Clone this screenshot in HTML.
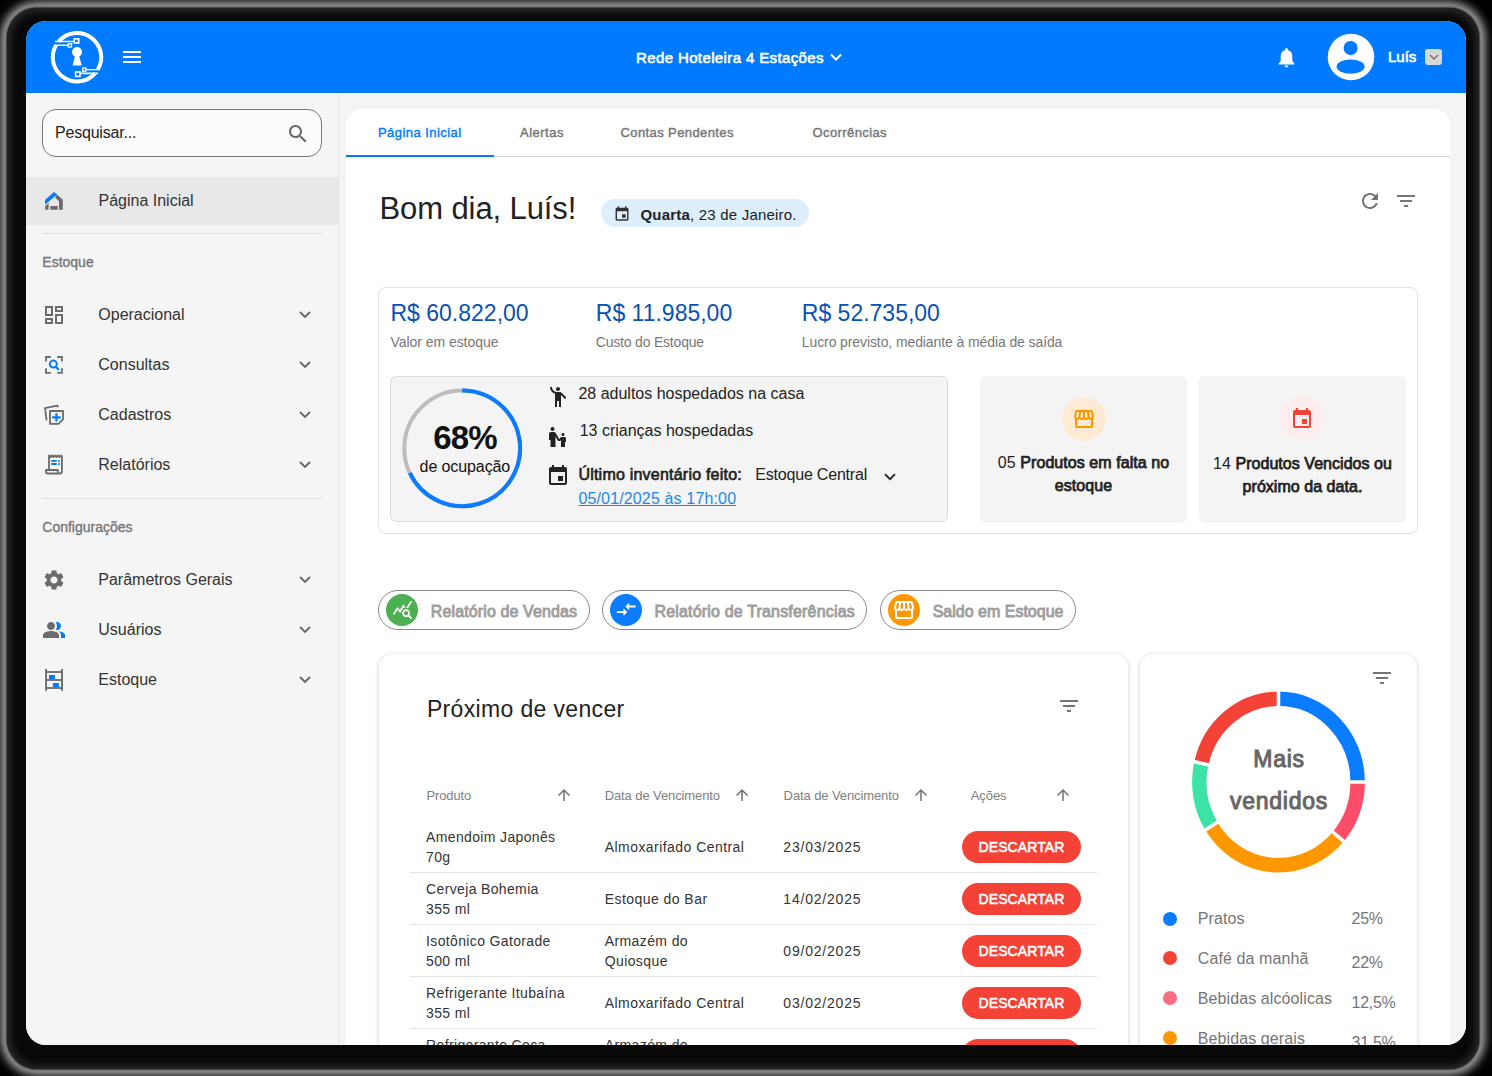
<!DOCTYPE html>
<html><head><meta charset="utf-8">
<style>
*{box-sizing:border-box;margin:0;padding:0}
html,body{width:1492px;height:1076px;overflow:hidden;background:#000;font-family:"Liberation Sans",sans-serif}
.glow{position:absolute;left:7px;top:8px;width:1472px;height:1061px;border-radius:30px;box-shadow:0 0 10px 6px #b0b0b0}
.dark{position:absolute;left:7px;top:8px;width:1472px;height:1061px;border-radius:30px;background:#080808;box-shadow:0 0 2px 1px #2a2a2a,inset 0 0 8px 3px #2e2e2e}
.frame{position:absolute;left:26px;top:21px;width:1440px;height:1024px;border-radius:20px;overflow:hidden;background:#F4F4F4}
.P{position:absolute;left:-26px;top:-21px;width:1492px;height:1076px}
.a{position:absolute}
.t{position:absolute;white-space:nowrap;line-height:1}
.sb{-webkit-text-stroke:0.75px #222}
svg{position:absolute;overflow:visible}
</style></head>
<body>
<div class="glow"></div><div class="dark"></div>
<div class="frame"><div class="P">
<div class="a" style="left:26px;top:93px;width:312px;height:952px;background:#F5F5F5"></div>
<div class="a" style="left:338px;top:93px;width:1px;height:952px;background:#E3E3E3"></div>
<div class="a" style="left:339px;top:93px;width:1127px;height:952px;background:#F4F4F4"></div>
<div class="a" style="left:346px;top:109px;width:1104px;height:960px;background:#fff;border-radius:16px 16px 0 0"></div>
<div class="a" style="left:26px;top:21px;width:1440px;height:72px;background:#007BFF"></div>
<svg style="left:0px;top:0px;" width="200" height="100" viewBox="0 0 200 100"><g fill="none" stroke="#fff"><path d="M58.58 41.5 A24.2 24.2 0 0 1 97.78 69.6" stroke-width="4"/><path d="M95.07 73.3 A24.2 24.2 0 0 1 55.98 45.2" stroke-width="4"/><path d="M55 41.5 H74" stroke-width="1.6"/><rect x="74.3" y="38.8" width="4.4" height="4.2" stroke-width="1.6"/><path d="M54 45.2 H68" stroke-width="1.4"/><rect x="68.2" y="43.8" width="3.3" height="3.2" stroke-width="1.3"/><path d="M86 69.6 H100" stroke-width="1.4"/><rect x="82.6" y="68" width="3.3" height="3.2" stroke-width="1.3"/><path d="M80 73.4 H98" stroke-width="1.6"/><rect x="75.6" y="72" width="4.4" height="4.4" stroke-width="1.6"/></g><g fill="#fff"><circle cx="77" cy="52" r="5"/><path d="M75.2 55 L78.8 55 L81.8 65.6 L72.6 65.6 Z"/><rect x="123" y="51" width="18" height="2"/><rect x="123" y="56" width="18" height="2"/><rect x="123" y="61" width="18" height="2"/></g></svg>
<div class="t" style="left:636.00px;top:49.70px;font-size:15px;color:#fff;letter-spacing:0.38px;-webkit-text-stroke:0.6px #fff;">Rede Hoteleira 4 Estações</div>
<svg style="left:830px;top:53px;" width="12" height="8" viewBox="0 0 12 8"><path d="M1 1.5 L6 6.5 L11 1.5" fill="none" stroke="#fff" stroke-width="2"/></svg>
<svg style="left:1278px;top:47px;" width="17" height="21" viewBox="0 0 17 21"><path d="M8.5 1.2c1 0 1.6.7 1.6 1.5v.6c2.6.7 4.2 3 4.2 5.8v5.2l2 2v1.2H.7v-1.2l2-2V9.1c0-2.8 1.6-5.1 4.2-5.8v-.6c0-.8.6-1.5 1.6-1.5zM6.6 18.6h3.8c0 1.1-.9 1.9-1.9 1.9s-1.9-.8-1.9-1.9z" fill="#fff"/></svg>
<svg style="left:1327px;top:33px;" width="48" height="48" viewBox="0 0 48 48"><circle cx="24" cy="24" r="23.3" fill="#fff"/><circle cx="23.6" cy="15" r="7" fill="#007BFF"/><ellipse cx="23.6" cy="33.6" rx="14" ry="7.2" fill="#007BFF"/></svg>
<div class="t" style="left:1388.00px;top:49.00px;font-size:15px;color:#fff;letter-spacing:0px;-webkit-text-stroke:0.6px #fff;">Luís</div>
<div class="a" style="left:1425px;top:49px;width:17px;height:16px;background:#D8D8D8;border-radius:3px"></div>
<svg style="left:1429px;top:54px;" width="10" height="6" viewBox="0 0 10 6"><path d="M1 1 L5 5 L9 1" fill="none" stroke="#777" stroke-width="1.5"/></svg>
<div class="a" style="left:42px;top:109px;width:280px;height:48px;background:#FBFBFB;border:1px solid #7A7A7A;border-radius:14px"></div>
<div class="t" style="left:55.00px;top:124.65px;font-size:16px;color:#222;letter-spacing:-0.2px;">Pesquisar...</div>
<svg style="left:285.7px;top:121.7px;" width="24" height="24" viewBox="0 0 24 24"><path fill="#666" d="M15.5 14h-.79l-.28-.27C15.41 12.59 16 11.11 16 9.5 16 5.91 13.09 3 9.5 3S3 5.91 3 9.5 5.91 16 9.5 16c1.61 0 3.09-.59 4.23-1.57l.27.28v.79l5 4.99L20.49 19l-4.99-5zm-6 0C7.01 14 5 11.99 5 9.5S7.01 5 9.5 5 14 7.01 14 9.5 11.99 14 9.5 14z"/></svg>
<div class="a" style="left:26px;top:177px;width:312px;height:48px;background:#E8E8E8"></div>
<svg style="left:36px;top:180px;" width="40" height="40" viewBox="0 0 40 40"><path fill="#007BFF" d="M9 20 L18 12 L21.2 14.5 L9.1 24.5 Z"/><path fill="#6B6B6B" d="M21.2 14.5 L26.8 19.7 L26.8 29.7 L23 29.7 L23 21.2 L19 17.5 Z M9.1 26 L12.6 23 L12.6 29.7 L9.1 29.7 Z M14.3 26 H21.7 V29.7 H14.3 Z"/></svg>
<div class="t" style="left:98.50px;top:192.65px;font-size:16px;color:#333;">Página Inicial</div>
<div class="a" style="left:42px;top:233px;width:280px;height:1px;background:#DCDCDC"></div>
<div class="t" style="left:42.30px;top:255.45px;font-size:14px;color:#777;letter-spacing:0px;-webkit-text-stroke:0.35px #777;">Estoque</div>
<div class="t" style="left:98.30px;top:306.85px;font-size:16px;color:#333;">Operacional</div>
<svg style="left:299px;top:310.5px;" width="12" height="8" viewBox="0 0 12 8"><path d="M1 1 L6 6 L11 1" fill="none" stroke="#666" stroke-width="1.8"/></svg>
<div class="t" style="left:98.30px;top:356.85px;font-size:16px;color:#333;">Consultas</div>
<svg style="left:299px;top:360.5px;" width="12" height="8" viewBox="0 0 12 8"><path d="M1 1 L6 6 L11 1" fill="none" stroke="#666" stroke-width="1.8"/></svg>
<div class="t" style="left:98.30px;top:406.85px;font-size:16px;color:#333;">Cadastros</div>
<svg style="left:299px;top:410.5px;" width="12" height="8" viewBox="0 0 12 8"><path d="M1 1 L6 6 L11 1" fill="none" stroke="#666" stroke-width="1.8"/></svg>
<div class="t" style="left:98.30px;top:456.85px;font-size:16px;color:#333;">Relatórios</div>
<svg style="left:299px;top:460.5px;" width="12" height="8" viewBox="0 0 12 8"><path d="M1 1 L6 6 L11 1" fill="none" stroke="#666" stroke-width="1.8"/></svg>
<svg style="left:42px;top:303px;" width="24" height="24" viewBox="0 0 24 24"><path fill="#6B6B6B" d="M19 5v2h-4V5h4M9 5v6H5V5h4m10 8v6h-4v-6h4M9 17v2H5v-2h4M21 3h-8v6h8V3zM11 3H3v10h8V3zm10 8h-8v10h8V11zm-10 4H3v6h8v-6z"/></svg>
<svg style="left:36px;top:344px;" width="40" height="40" viewBox="0 0 40 40"><g fill="none" stroke="#6B6B6B" stroke-width="1.8"><path d="M10 17.6 V13 H14.8"/><path d="M21.2 13 H25.9 V17.6"/><path d="M10 24.2 V28.8 H14.8"/><path d="M21.2 28.8 H25.9 V24.2"/></g><g fill="none" stroke="#007BFF" stroke-width="2"><circle cx="17.3" cy="20.1" r="3.5"/><path d="M20 23 L22.3 25.2" stroke-linecap="round" stroke-width="2.2"/></g></svg>
<svg style="left:36px;top:394px;" width="40" height="40" viewBox="0 0 40 40"><g fill="none" stroke="#6B6B6B" stroke-width="1.8" stroke-linejoin="round"><path d="M10.6 26.4 L9 14.1 L21.2 11.6 L22.3 13.2"/><path d="M14 17 H27 V25.3 L22.5 29.8 H14 Z"/></g><g stroke="#007BFF" stroke-width="2.2" stroke-linecap="round"><path d="M20.4 20 V26.7"/><path d="M17 23.4 H23.8"/></g></svg>
<svg style="left:36px;top:444px;" width="40" height="40" viewBox="0 0 40 40"><g fill="none" stroke="#6B6B6B" stroke-width="1.8" stroke-linejoin="round"><path d="M13 25.5 V11.5 L14.5 13 L16 11.5 L17.5 13 L19 11.5 L20.5 13 L22 11.5 L23.5 13 L25 11.5 L25.9 12.5 V27.5 Q25.9 29.5 23.9 29.5 H11.5 Q10 29.5 10 27.5 V26 H21.8 V29"/></g><g fill="#007BFF"><rect x="15.1" y="16" width="5.7" height="1.8" rx=".4"/><rect x="22.1" y="16" width="1.9" height="1.8" rx=".4"/><rect x="15.1" y="19.1" width="5.7" height="1.9" rx=".4"/><rect x="22.1" y="19.1" width="1.9" height="1.9" rx=".4"/></g></svg>
<div class="a" style="left:42px;top:498px;width:280px;height:1px;background:#DCDCDC"></div>
<div class="t" style="left:42.30px;top:520.35px;font-size:14px;color:#777;letter-spacing:0px;-webkit-text-stroke:0.35px #777;">Configurações</div>
<div class="t" style="left:98.30px;top:571.85px;font-size:16px;color:#333;">Parâmetros Gerais</div>
<svg style="left:299px;top:575.5px;" width="12" height="8" viewBox="0 0 12 8"><path d="M1 1 L6 6 L11 1" fill="none" stroke="#666" stroke-width="1.8"/></svg>
<div class="t" style="left:98.30px;top:621.85px;font-size:16px;color:#333;">Usuários</div>
<svg style="left:299px;top:625.5px;" width="12" height="8" viewBox="0 0 12 8"><path d="M1 1 L6 6 L11 1" fill="none" stroke="#666" stroke-width="1.8"/></svg>
<div class="t" style="left:98.30px;top:671.85px;font-size:16px;color:#333;">Estoque</div>
<svg style="left:299px;top:675.5px;" width="12" height="8" viewBox="0 0 12 8"><path d="M1 1 L6 6 L11 1" fill="none" stroke="#666" stroke-width="1.8"/></svg>
<svg style="left:42px;top:568px;" width="24" height="24" viewBox="0 0 24 24"><path fill="#6B6B6B" d="M19.14 12.94c.04-.3.06-.61.06-.94 0-.32-.02-.64-.07-.94l2.03-1.58c.18-.14.23-.41.12-.61l-1.92-3.32c-.12-.22-.37-.29-.59-.22l-2.39.96c-.5-.38-1.03-.7-1.62-.94l-.36-2.54c-.04-.24-.24-.41-.48-.41h-3.84c-.24 0-.43.17-.47.41l-.36 2.54c-.59.24-1.13.57-1.62.94l-2.39-.96c-.22-.08-.47 0-.59.22L2.74 8.87c-.12.21-.08.47.12.61l2.03 1.58c-.05.3-.09.63-.09.94s.02.64.07.94l-2.03 1.58c-.18.14-.23.41-.12.61l1.92 3.32c.12.22.37.29.59.22l2.39-.96c.5.38 1.03.7 1.62.94l.36 2.54c.05.24.24.41.48.41h3.84c.24 0 .44-.17.47-.41l.36-2.54c.59-.24 1.13-.56 1.62-.94l2.39.96c.22.08.47 0 .59-.22l1.92-3.32c.12-.22.07-.47-.12-.61l-2.01-1.58zM12 15.6c-1.98 0-3.6-1.62-3.6-3.6s1.62-3.6 3.6-3.6 3.6 1.62 3.6 3.6-1.62 3.6-3.6 3.6z"/></svg>
<svg style="left:42.1px;top:617.9px;" width="24" height="24" viewBox="0 0 24 24"><path fill="#007BFF" d="M16.67 13.13C18.04 14.06 19 15.32 19 17v3h4v-3c0-2.18-3.57-3.47-6.33-3.87zM15 12c2.21 0 4-1.79 4-4s-1.79-4-4-4c-.47 0-.91.1-1.33.24C14.5 5.27 15 6.58 15 8s-.5 2.73-1.33 3.76c.42.14.86.24 1.33.24z"/><path fill="#6B6B6B" d="M9 12c2.21 0 4-1.79 4-4s-1.79-4-4-4-4 1.79-4 4 1.79 4 4 4zm0 1c-2.67 0-8 1.34-8 4v3h16v-3c0-2.66-5.33-4-8-4z"/></svg>
<svg style="left:36px;top:659px;" width="40" height="40" viewBox="0 0 40 40"><g fill="#6B6B6B"><rect x="9.1" y="10" width="1.9" height="21.8"/><rect x="25.1" y="10" width="1.9" height="21.8"/><rect x="10" y="12.1" width="16" height="1.8"/><rect x="10" y="20.1" width="16" height="1.8"/><rect x="10" y="28.1" width="16" height="1.8"/></g><g fill="#007BFF"><rect x="13" y="16" width="6" height="4.1"/><rect x="16.9" y="24" width="6" height="4.1"/></g></svg>
<div class="t" style="left:378.00px;top:126.29px;font-size:13px;color:#007BFF;letter-spacing:0.45px;-webkit-text-stroke:0.4px #007BFF;">Página Inicial</div>
<div class="t" style="left:520.00px;top:126.29px;font-size:13px;color:#757575;letter-spacing:0.5px;-webkit-text-stroke:0.4px #757575;">Alertas</div>
<div class="t" style="left:620.50px;top:126.29px;font-size:13px;color:#757575;letter-spacing:0.4px;-webkit-text-stroke:0.4px #757575;">Contas Pendentes</div>
<div class="t" style="left:812.50px;top:126.29px;font-size:13px;color:#757575;letter-spacing:0.4px;-webkit-text-stroke:0.4px #757575;">Ocorrências</div>
<div class="a" style="left:346px;top:156px;width:1104px;height:1px;background:#CFCFCF"></div>
<div class="a" style="left:346px;top:155px;width:148px;height:2px;background:#007BFF"></div>
<div class="t" style="left:379.50px;top:192.95px;font-size:31px;color:#222;letter-spacing:-0.1px;">Bom dia, Luís!</div>
<div class="a" style="left:601px;top:199px;width:208px;height:28px;background:#DDEEFD;border-radius:14px"></div>
<svg style="left:609.5px;top:201.5px;" width="24" height="24" viewBox="0 0 24 24"><g transform="translate(3.4,3.6) scale(0.72)"><path fill="#333" d="M17 12h-5v5h5v-5zM16 1v2H8V1H6v2H5c-1.11 0-1.99.9-1.99 2L3 19c0 1.1.89 2 2 2h14c1.1 0 2-.9 2-2V5c0-1.1-.9-2-2-2h-1V1h-2zm3 18H5V8h14v11z"/></g></svg>
<div class="t" style="left:640.5px;top:206.80px;font-size:15px;color:#222;letter-spacing:0.2px"><b>Quarta</b>, 23 de Janeiro.</div>
<svg style="left:1358px;top:189px;" width="24" height="24" viewBox="0 0 24 24"><path fill="#757575" d="M17.65 6.35C16.2 4.9 14.21 4 12 4c-4.42 0-7.99 3.58-7.99 8s3.57 8 7.99 8c3.73 0 6.84-2.55 7.73-6h-2.08c-.82 2.33-3.04 4-5.65 4-3.31 0-6-2.69-6-6s2.69-6 6-6c1.66 0 3.14.69 4.22 1.78L13 11h7V4l-2.35 2.35z"/></svg>
<svg style="left:1394px;top:189px;" width="24" height="24" viewBox="0 0 24 24"><path fill="#757575" d="M10 18h4v-2h-4v2zM3 6v2h18V6H3zm3 7h12v-2H6v2z"/></svg>
<div class="a" style="left:378px;top:287px;width:1040px;height:247px;border:1px solid #E2E2E2;border-radius:8px"></div>
<div class="t" style="left:390.50px;top:302.13px;font-size:23px;color:#0653B4;">R$ 60.822,00</div>
<div class="t" style="left:390.50px;top:334.95px;font-size:14px;color:#777;letter-spacing:-0.05px;">Valor em estoque</div>
<div class="t" style="left:595.80px;top:302.13px;font-size:23px;color:#0653B4;">R$ 11.985,00</div>
<div class="t" style="left:595.80px;top:334.95px;font-size:14px;color:#777;letter-spacing:-0.2px;">Custo do Estoque</div>
<div class="t" style="left:801.80px;top:302.13px;font-size:23px;color:#0653B4;">R$ 52.735,00</div>
<div class="t" style="left:801.80px;top:334.95px;font-size:14px;color:#777;letter-spacing:-0.1px;">Lucro previsto, mediante à média de saída</div>
<div class="a" style="left:390px;top:376px;width:558px;height:146px;background:#F4F4F4;border:1px solid #DDDDDD;border-radius:6px"></div>
<svg style="left:0px;top:0px;pointer-events:none" width="1492" height="1076" viewBox="0 0 1492 1076"><circle cx="462.2" cy="448.3" r="57.9" fill="none" stroke="#BDBDBD" stroke-width="4"/><path d="M462.2 390.40000000000003 A57.9 57.9 0 1 1 409.81 472.95" fill="none" stroke="#0A7CFF" stroke-width="4"/></svg>
<div class="t" style="left:405.00px;width:120px;text-align:center;top:421.36px;font-size:33px;color:#111;font-weight:700;letter-spacing:-0.8px;">68%</div>
<div class="t" style="left:404.90px;width:120px;text-align:center;top:459.35px;font-size:16px;color:#111;letter-spacing:-0.1px;">de ocupação</div>
<svg style="left:545.9px;top:385.1px;" width="24" height="24" viewBox="0 0 24 24"><g fill="#222"><circle cx="12" cy="4" r="2"/><path d="M15.89 8.11C15.5 7.72 14.83 7 13.53 7h-2.54C8.24 6.99 6 4.75 6 2H4c0 3.16 2.11 5.84 5 6.71V22h2v-6h2v6h2V10.05L18.95 14l1.41-1.41-4.47-4.48z"/></g></svg>
<div class="t" style="left:578.40px;top:385.55px;font-size:16px;color:#222;">28 adultos hospedados na casa</div>
<svg style="left:545.7px;top:424.8px;" width="24" height="24" viewBox="0 0 24 24"><path fill="#222" d="M6.5 2c1.1 0 2 .9 2 2s-.9 2-2 2-2-.9-2-2 .9-2 2-2zm9 7.5c0 .83.67 1.5 1.5 1.5s1.5-.67 1.5-1.5S17.83 8 17 8s-1.5.67-1.5 1.5zm3 2.5h-2.84c-.58.01-1.14.32-1.45.86l-.92 1.32L9.72 8c-.37-.63-1.03-.99-1.71-1H5c-1.1 0-2 .9-2 2v6h1.5v7h5V11.61L12.03 16h2.2l.77-1.1V22h4v-5h1v-3.5c0-.82-.67-1.5-1.5-1.5z"/></svg>
<div class="t" style="left:579.70px;top:423.45px;font-size:16px;color:#222;">13 crianças hospedadas</div>
<svg style="left:545.7px;top:464.2px;" width="24" height="24" viewBox="0 0 24 24"><path fill="#222" d="M17 12h-5v5h5v-5zM16 1v2H8V1H6v2H5c-1.11 0-1.99.9-1.99 2L3 19c0 1.1.89 2 2 2h14c1.1 0 2-.9 2-2V5c0-1.1-.9-2-2-2h-1V1h-2zm3 18H5V8h14v11z"/></svg>
<div class="t" style="left:578.40px;top:467.15px;font-size:16px;color:#222;letter-spacing:0.22px;-webkit-text-stroke:0.65px #222;">Último inventário feito:</div>
<div class="t" style="left:755.30px;top:467.15px;font-size:16px;color:#222;letter-spacing:-0.2px;">Estoque Central</div>
<svg style="left:884px;top:473.3px;" width="12" height="8" viewBox="0 0 12 8"><path d="M1 1.2 L6 6.2 L11 1.2" fill="none" stroke="#222" stroke-width="1.8"/></svg>
<div class="t" style="left:578.40px;top:491.35px;font-size:16px;color:#1E88F0;letter-spacing:0.15px;text-decoration:underline;">05/01/2025 às 17h:00</div>
<div class="a" style="left:980px;top:376px;width:207px;height:145px;background:#F4F4F4;border-radius:6px;box-shadow:0 1px 1px rgba(0,0,0,0.08)"></div>
<div class="a" style="left:1199px;top:376px;width:207px;height:145px;background:#F4F4F4;border-radius:6px;box-shadow:0 1px 1px rgba(0,0,0,0.08)"></div>
<div class="a" style="left:1061.9px;top:397.3px;width:44px;height:44px;background:#FFEBD3;border-radius:50%"></div>
<div class="a" style="left:1280.4px;top:396.2px;width:44px;height:44px;background:#FDEDED;border-radius:50%"></div>
<svg style="left:1071.8px;top:407px;" width="24" height="24" viewBox="0 0 24 24"><g fill="#FF9800"><path d="M21.9 8.89l-1.05-4.37c-.22-.9-1-1.52-1.91-1.52H5.05c-.9 0-1.69.63-1.9 1.52L2.1 8.89c-.24 1.02-.02 2.06.62 2.88.08.11.19.19.28.29V19c0 1.1.9 2 2 2h14c1.1 0 2-.9 2-2v-6.94c.09-.09.2-.18.28-.28.64-.82.87-1.87.62-2.89zm-2.99-3.9l1.05 4.37c.1.42.01.84-.25 1.17-.14.18-.44.47-.94.47-.61 0-1.14-.49-1.21-1.14L16.98 5l1.93-.01zM13 5h1.96l.54 4.52c.05.39-.07.78-.33 1.07-.22.26-.54.41-.95.41-.67 0-1.22-.59-1.22-1.31V5zM8.49 9.52L9.04 5H11v4.69c0 .72-.55 1.31-1.29 1.31-.34 0-.65-.15-.89-.41-.25-.29-.37-.68-.33-1.07zm-4.45-.16L5.05 5h1.97l-.58 4.86c-.08.65-.6 1.14-1.21 1.14-.49 0-.8-.29-.93-.47-.27-.32-.36-.75-.26-1.17zM5 19v-6.03c.08.01.15.03.23.03.87 0 1.66-.36 2.24-.95.6.6 1.4.95 2.31.95.87 0 1.65-.36 2.23-.93.59.57 1.39.93 2.29.93.84 0 1.64-.35 2.24-.95.58.59 1.37.95 2.24.95.08 0 .15-.02.23-.03V19H5z"/></g></svg>
<svg style="left:1290.4px;top:406.8px;" width="24" height="24" viewBox="0 0 24 24"><path fill="#F44336" d="M17 12h-5v5h5v-5zM16 1v2H8V1H6v2H5c-1.11 0-1.99.9-1.99 2L3 19c0 1.1.89 2 2 2h14c1.1 0 2-.9 2-2V5c0-1.1-.9-2-2-2h-1V1h-2zm3 18H5V8h14v11z"/></svg>
<div class="t" style="left:980px;width:207px;text-align:center;top:450.50px;font-size:16px;line-height:23.5px;color:#222;white-space:normal;letter-spacing:0.06px;padding:0 8px">05 <span class="sb">Produtos em falta no estoque</span></div>
<div class="t" style="left:1199px;width:207px;text-align:center;top:451.55px;font-size:16px;line-height:23.8px;color:#222;white-space:normal;letter-spacing:0.04px;padding:0 4px">14 <span class="sb">Produtos Vencidos ou próximo da data.</span></div>
<div class="a" style="left:378px;top:590px;width:212px;height:40px;border:1px solid #8A8A8A;border-radius:20px;background:#fff"></div>
<div class="a" style="left:386.1px;top:593.7px;width:32px;height:32px;background:#4CAF50;border-radius:50%"></div>
<svg style="left:391.5px;top:599.2px;" width="21" height="21" viewBox="0 0 24 24"><path fill="#fff" d="M19.88 18.47c.44-.7.7-1.51.7-2.39 0-2.49-2.01-4.5-4.5-4.5s-4.5 2.01-4.5 4.5 2.01 4.5 4.49 4.5c.88 0 1.7-.26 2.39-.7L21.58 23 23 21.58l-3.12-3.11zm-3.8.11c-1.38 0-2.5-1.12-2.5-2.5s1.12-2.5 2.5-2.5 2.5 1.12 2.5 2.5-1.12 2.5-2.5 2.5zm-.36-8.5c-.74.02-1.45.18-2.1.45l-.55-.83-3.8 6.18-3.01-3.52-3.63 5.81L1 17l5-8 3 3.5L13 6l2.72 4.08zm2.59.5c-.64-.28-1.330-.45-2.05-.49L21.38 2 23 3.18l-4.69 7.4z"/></svg>
<div class="t" style="left:430.80px;top:603.75px;font-size:16px;color:#9E9E9E;letter-spacing:0.12px;-webkit-text-stroke:0.85px #9E9E9E;">Relatório de Vendas</div>
<div class="a" style="left:602px;top:590px;width:265px;height:40px;border:1px solid #8A8A8A;border-radius:20px;background:#fff"></div>
<div class="a" style="left:609.9px;top:593.7px;width:32px;height:32px;background:#0A7CFF;border-radius:50%"></div>
<svg style="left:614.6px;top:598.3px;" width="22.6" height="22.6" viewBox="0 0 24 24"><path fill="#fff" d="M9.01 14H2v2h7.01v3L13 15l-3.990-4v3zm5.98-1v-3H22V8h-7.01V5L11 9l3.99 4z"/></svg>
<div class="t" style="left:654.40px;top:603.75px;font-size:16px;color:#9E9E9E;letter-spacing:0.18px;-webkit-text-stroke:0.85px #9E9E9E;">Relatório de Transferências</div>
<div class="a" style="left:880px;top:590px;width:196px;height:40px;border:1px solid #8A8A8A;border-radius:20px;background:#fff"></div>
<div class="a" style="left:887.9px;top:593.7px;width:32px;height:32px;background:#FF9800;border-radius:50%"></div>
<svg style="left:891.9px;top:597.6px;" width="24" height="24" viewBox="0 0 24 24"><g fill="#fff"><path d="M21.9 8.89l-1.05-4.37c-.22-.9-1-1.52-1.91-1.52H5.05c-.9 0-1.69.63-1.9 1.52L2.1 8.89c-.24 1.02-.02 2.06.62 2.88.08.11.19.19.28.29V19c0 1.1.9 2 2 2h14c1.1 0 2-.9 2-2v-6.94c.09-.09.2-.18.28-.28.64-.82.87-1.87.62-2.89zm-2.99-3.9l1.05 4.37c.1.42.01.84-.25 1.17-.14.18-.44.47-.94.47-.61 0-1.14-.49-1.21-1.14L16.98 5l1.93-.01zM13 5h1.96l.54 4.52c.05.39-.07.78-.33 1.07-.22.26-.54.41-.95.41-.67 0-1.22-.59-1.22-1.31V5zM8.49 9.52L9.04 5H11v4.69c0 .72-.55 1.31-1.29 1.31-.34 0-.65-.15-.89-.41-.25-.29-.37-.68-.33-1.07zm-4.45-.16L5.05 5h1.97l-.58 4.86c-.08.65-.6 1.14-1.21 1.14-.49 0-.8-.29-.93-.47-.27-.32-.36-.75-.26-1.17zM5 19v-6.03c.08.01.15.03.23.03.87 0 1.66-.36 2.24-.95.6.6 1.4.95 2.31.95.87 0 1.65-.36 2.23-.93.59.57 1.39.93 2.29.93.84 0 1.64-.35 2.24-.95.58.59 1.37.95 2.24.95.08 0 .15-.02.23-.03V19H5z"/></g></svg>
<div class="t" style="left:932.70px;top:603.75px;font-size:16px;color:#9E9E9E;letter-spacing:0px;-webkit-text-stroke:0.85px #9E9E9E;">Saldo em Estoque</div>
<div class="a" style="left:378.8px;top:654px;width:749.2px;height:420px;background:#fff;border-radius:14px;box-shadow:0 1px 5px rgba(0,0,0,0.2)"></div>
<div class="t" style="left:426.90px;top:697.63px;font-size:23px;color:#222;letter-spacing:0.35px;">Próximo de vencer</div>
<svg style="left:1057px;top:694px;" width="24" height="24" viewBox="0 0 24 24"><path fill="#757575" d="M10 18h4v-2h-4v2zM3 6v2h18V6H3zm3 7h12v-2H6v2z"/></svg>
<div class="t" style="left:426.40px;top:789.09px;font-size:13px;color:#808080;letter-spacing:-0.1px;">Produto</div>
<svg style="left:554.8px;top:786px;" width="18" height="18" viewBox="0 0 24 24"><path fill="#707070" d="M4 12l1.41 1.41L11 7.83V20h2V7.83l5.58 5.59L20 12l-8-8-8 8z"/></svg>
<div class="t" style="left:604.70px;top:789.09px;font-size:13px;color:#808080;letter-spacing:-0.1px;">Data de Vencimento</div>
<svg style="left:733px;top:786px;" width="18" height="18" viewBox="0 0 24 24"><path fill="#707070" d="M4 12l1.41 1.41L11 7.83V20h2V7.83l5.58 5.59L20 12l-8-8-8 8z"/></svg>
<div class="t" style="left:783.60px;top:789.09px;font-size:13px;color:#808080;letter-spacing:-0.1px;">Data de Vencimento</div>
<svg style="left:912px;top:786px;" width="18" height="18" viewBox="0 0 24 24"><path fill="#707070" d="M4 12l1.41 1.41L11 7.83V20h2V7.83l5.58 5.59L20 12l-8-8-8 8z"/></svg>
<div class="t" style="left:970.80px;top:789.09px;font-size:13px;color:#808080;letter-spacing:-0.1px;">Ações</div>
<svg style="left:1054.1px;top:786px;" width="18" height="18" viewBox="0 0 24 24"><path fill="#707070" d="M4 12l1.41 1.41L11 7.83V20h2V7.83l5.58 5.59L20 12l-8-8-8 8z"/></svg>
<div class="t" style="left:426.10px;top:830.45px;font-size:14px;color:#333;letter-spacing:0.35px;">Amendoim Japonês</div>
<div class="t" style="left:426.10px;top:849.85px;font-size:14px;color:#333;letter-spacing:0.35px;">70g</div>
<div class="t" style="left:604.70px;top:840.35px;font-size:14px;color:#333;letter-spacing:0.45px;">Almoxarifado Central</div>
<div class="t" style="left:783.30px;top:840.05px;font-size:14px;color:#333;letter-spacing:0.8px;">23/03/2025</div>
<div class="a" style="left:962px;top:831px;width:119px;height:32px;background:#F44336;border-radius:16px"></div>
<div class="t" style="left:962.00px;width:119px;text-align:center;top:840.05px;font-size:14px;color:#fff;letter-spacing:0.1px;-webkit-text-stroke:0.55px #fff;">DESCARTAR</div>
<div class="a" style="left:410px;top:872px;width:687px;height:1px;background:#E3E3E3"></div>
<div class="t" style="left:426.10px;top:882.45px;font-size:14px;color:#333;letter-spacing:0.35px;">Cerveja Bohemia</div>
<div class="t" style="left:426.10px;top:901.85px;font-size:14px;color:#333;letter-spacing:0.35px;">355 ml</div>
<div class="t" style="left:604.70px;top:892.35px;font-size:14px;color:#333;letter-spacing:0.45px;">Estoque do Bar</div>
<div class="t" style="left:783.30px;top:892.05px;font-size:14px;color:#333;letter-spacing:0.8px;">14/02/2025</div>
<div class="a" style="left:962px;top:883px;width:119px;height:32px;background:#F44336;border-radius:16px"></div>
<div class="t" style="left:962.00px;width:119px;text-align:center;top:892.05px;font-size:14px;color:#fff;letter-spacing:0.1px;-webkit-text-stroke:0.55px #fff;">DESCARTAR</div>
<div class="a" style="left:410px;top:924px;width:687px;height:1px;background:#E3E3E3"></div>
<div class="t" style="left:426.10px;top:934.45px;font-size:14px;color:#333;letter-spacing:0.35px;">Isotônico Gatorade</div>
<div class="t" style="left:426.10px;top:953.85px;font-size:14px;color:#333;letter-spacing:0.35px;">500 ml</div>
<div class="t" style="left:604.70px;top:934.45px;font-size:14px;color:#333;letter-spacing:0.4px;">Armazém do</div>
<div class="t" style="left:604.70px;top:953.85px;font-size:14px;color:#333;letter-spacing:0.4px;">Quiosque</div>
<div class="t" style="left:783.30px;top:944.05px;font-size:14px;color:#333;letter-spacing:0.8px;">09/02/2025</div>
<div class="a" style="left:962px;top:935px;width:119px;height:32px;background:#F44336;border-radius:16px"></div>
<div class="t" style="left:962.00px;width:119px;text-align:center;top:944.05px;font-size:14px;color:#fff;letter-spacing:0.1px;-webkit-text-stroke:0.55px #fff;">DESCARTAR</div>
<div class="a" style="left:410px;top:976px;width:687px;height:1px;background:#E3E3E3"></div>
<div class="t" style="left:426.10px;top:986.45px;font-size:14px;color:#333;letter-spacing:0.35px;">Refrigerante Itubaína</div>
<div class="t" style="left:426.10px;top:1005.85px;font-size:14px;color:#333;letter-spacing:0.35px;">355 ml</div>
<div class="t" style="left:604.70px;top:996.35px;font-size:14px;color:#333;letter-spacing:0.45px;">Almoxarifado Central</div>
<div class="t" style="left:783.30px;top:996.05px;font-size:14px;color:#333;letter-spacing:0.8px;">03/02/2025</div>
<div class="a" style="left:962px;top:987px;width:119px;height:32px;background:#F44336;border-radius:16px"></div>
<div class="t" style="left:962.00px;width:119px;text-align:center;top:996.05px;font-size:14px;color:#fff;letter-spacing:0.1px;-webkit-text-stroke:0.55px #fff;">DESCARTAR</div>
<div class="a" style="left:410px;top:1028px;width:687px;height:1px;background:#E3E3E3"></div>
<div class="t" style="left:426.10px;top:1038.45px;font-size:14px;color:#333;letter-spacing:0.35px;">Refrigerante Coca-</div>
<div class="t" style="left:426.10px;top:1057.85px;font-size:14px;color:#333;letter-spacing:0.35px;">Cola</div>
<div class="t" style="left:604.70px;top:1038.45px;font-size:14px;color:#333;letter-spacing:0.4px;">Armazém do</div>
<div class="t" style="left:604.70px;top:1057.85px;font-size:14px;color:#333;letter-spacing:0.4px;">Quiosque</div>
<div class="t" style="left:783.30px;top:1048.05px;font-size:14px;color:#333;letter-spacing:0.8px;">01/02/2025</div>
<div class="a" style="left:962px;top:1039px;width:119px;height:32px;background:#F44336;border-radius:16px"></div>
<div class="t" style="left:962.00px;width:119px;text-align:center;top:1048.05px;font-size:14px;color:#fff;letter-spacing:0.1px;-webkit-text-stroke:0.55px #fff;">DESCARTAR</div>
<div class="a" style="left:410px;top:1080px;width:687px;height:1px;background:#E3E3E3"></div>
<div class="a" style="left:1140px;top:654px;width:277px;height:420px;background:#fff;border-radius:14px;box-shadow:0 1px 5px rgba(0,0,0,0.2)"></div>
<svg style="left:1370px;top:666px;" width="24" height="24" viewBox="0 0 24 24"><path fill="#757575" d="M10 18h4v-2h-4v2zM3 6v2h18V6H3zm3 7h12v-2H6v2z"/></svg>
<svg style="left:0px;top:0px;pointer-events:none" width="1492" height="1076" viewBox="0 0 1492 1076"><path d="M1278.50 698.75 A79.15 83.25 0 0 1 1357.65 782.00" fill="none" stroke="#0A7CFF" stroke-width="14.5"/><path d="M1357.65 782.00 A79.15 83.25 0 0 1 1338.24 836.62" fill="none" stroke="#FF4D67" stroke-width="14.5"/><path d="M1338.24 836.62 A79.15 83.25 0 0 1 1211.38 826.12" fill="none" stroke="#FF9800" stroke-width="14.5"/><path d="M1211.38 826.12 A79.15 83.25 0 0 1 1201.38 763.27" fill="none" stroke="#3DE3A6" stroke-width="14.5"/><path d="M1201.38 763.27 A79.15 83.25 0 0 1 1278.50 698.75" fill="none" stroke="#F44336" stroke-width="14.5"/><path d="M1278.50 708.75 L1278.50 688.75" stroke="#fff" stroke-width="3.5"/><path d="M1347.65 782.00 L1367.65 782.00" stroke="#fff" stroke-width="3.5"/><path d="M1330.69 830.06 L1345.78 843.18" stroke="#fff" stroke-width="3.5"/><path d="M1219.86 820.82 L1202.90 831.41" stroke="#fff" stroke-width="3.5"/><path d="M1211.12 765.52 L1191.63 761.02" stroke="#fff" stroke-width="3.5"/></svg>
<div class="t" style="left:1209.00px;width:140px;text-align:center;top:748.33px;font-size:23px;color:#666;letter-spacing:0.7px;-webkit-text-stroke:1px #666;">Mais</div>
<div class="t" style="left:1209.00px;width:140px;text-align:center;top:789.73px;font-size:23px;color:#666;letter-spacing:0.75px;-webkit-text-stroke:1px #666;">vendidos</div>
<div class="a" style="left:1163px;top:911.5px;width:14px;height:14px;background:#0A7CFF;border-radius:50%"></div>
<div class="t" style="left:1197.80px;top:911.15px;font-size:16px;color:#757575;letter-spacing:0.1px;">Pratos</div>
<div class="t" style="left:1351.60px;top:911.15px;font-size:16px;color:#757575;letter-spacing:-0.3px;">25%</div>
<div class="a" style="left:1163px;top:951.2px;width:14px;height:14px;background:#F44336;border-radius:50%"></div>
<div class="t" style="left:1197.80px;top:950.85px;font-size:16px;color:#757575;letter-spacing:0.1px;">Café da manhã</div>
<div class="t" style="left:1351.60px;top:954.65px;font-size:16px;color:#757575;letter-spacing:-0.3px;">22%</div>
<div class="a" style="left:1163px;top:991.2px;width:14px;height:14px;background:#FF6B81;border-radius:50%"></div>
<div class="t" style="left:1197.80px;top:990.85px;font-size:16px;color:#757575;letter-spacing:0.1px;">Bebidas alcóolicas</div>
<div class="t" style="left:1351.60px;top:994.65px;font-size:16px;color:#757575;letter-spacing:-0.3px;">12,5%</div>
<div class="a" style="left:1163px;top:1031.0px;width:14px;height:14px;background:#FF9800;border-radius:50%"></div>
<div class="t" style="left:1197.80px;top:1030.65px;font-size:16px;color:#757575;letter-spacing:0.1px;">Bebidas gerais</div>
<div class="t" style="left:1351.60px;top:1034.55px;font-size:16px;color:#757575;letter-spacing:-0.3px;">31,5%</div>
</div></div>
</body></html>
